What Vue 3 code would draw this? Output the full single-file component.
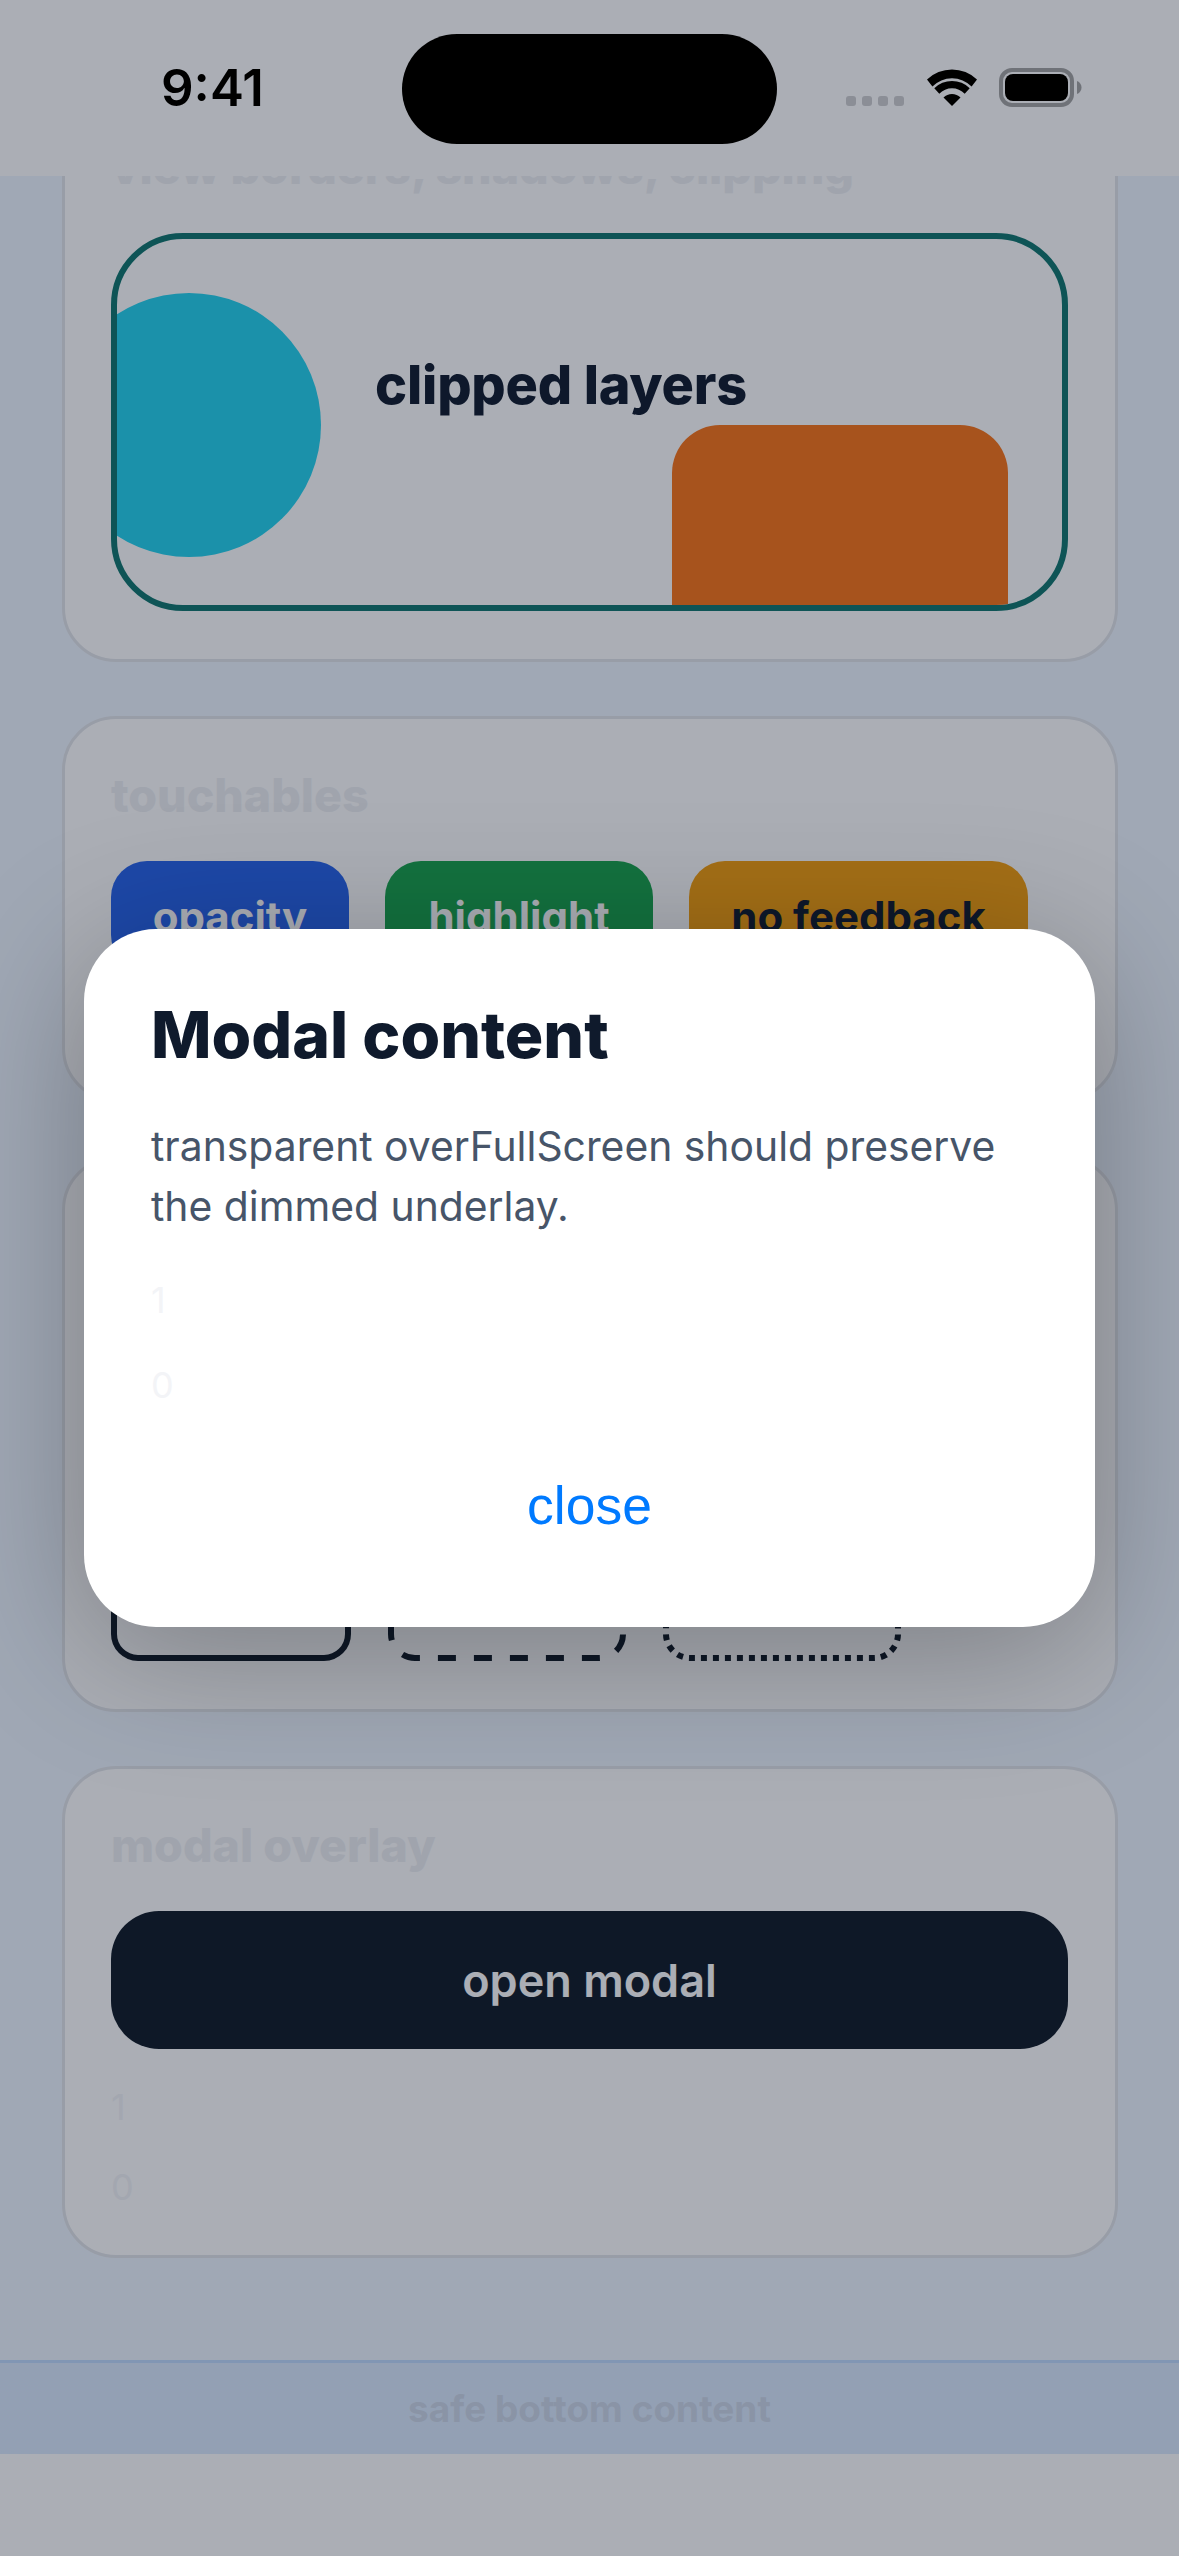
<script setup>
const touchables = [
  { label: 'opacity', cls: 'blue' },
  { label: 'highlight', cls: 'green' },
  { label: 'no feedback', cls: 'amber' }
]
const borders = [
  { dash: 'none', w: 240 },
  { dash: '18 18', w: 238 },
  { dash: '6 6', w: 238 }
]
</script>

<template>
  <div class="page">
    <div class="status-bg"></div>
    <main class="list">
      <section class="card card-view">
        <h2 class="title">view borders, shadows, clipping</h2>
        <div class="clip">
          <div class="circle"></div>
          <span class="clip-text">clipped layers</span>
          <div class="rust"></div>
        </div>
      </section>
      <section class="card card-touch">
        <h2 class="title">touchables</h2>
        <div class="btn-row">
          <div v-for="t in touchables" :key="t.label" class="tbtn" :class="t.cls">{{ t.label }}</div>
        </div>
      </section>
      <section class="card card-border">
        <div class="box-row">
          <svg v-for="(b, i) in borders" :key="i" class="box" :viewBox="`0 0 ${b.w} 120`" :width="b.w" height="120">
            <rect x="3" y="3" :width="b.w - 6" height="114" rx="24" fill="none" stroke="#0f1a26" stroke-width="6" :stroke-dasharray="b.dash" />
          </svg>
        </div>
      </section>
      <section class="card card-modal">
        <h2 class="title">modal overlay</h2>
        <div class="open-btn">open modal</div>
        <div class="counts">
          <span class="count">1</span>
          <span class="count">0</span>
        </div>
      </section>
    </main>
    <footer class="safe">
      <div class="safe-bar">safe bottom content</div>
    </footer>

    <div class="overlay">
      <div class="modal">
        <h1 class="modal-title">Modal content</h1>
        <p class="modal-body">transparent overFullScreen should preserve the dimmed underlay.</p>
        <div class="modal-count">1</div>
        <div class="modal-count">0</div>
        <div class="close">close</div>
      </div>
    </div>

    <header class="status">
      <div class="time">9:41</div>
      <div class="island"></div>
      <div class="indicators">
        <div class="dots"><i></i><i></i><i></i><i></i></div>
        <svg class="wifi" viewBox="0 0 50 37" width="50" height="37">
          <path d="M0 10.500A36 36 0 0 1 50 10.500L44.600 17.500A27.500 27.500 0 0 0 5.400 17.500Z" />
          <path d="M7.300 19.300A25 25 0 0 1 42.700 19.300L37.700 24.800A17.500 17.500 0 0 0 12.300 24.800Z" />
          <path d="M16.500 28.500A12 12 0 0 1 33.500 28.500L25 37Z" />
        </svg>
        <svg class="battery" viewBox="0 0 83 39" width="83" height="39">
          <rect x="2" y="2" width="71" height="35" rx="11" fill="none" stroke="#6f7278" stroke-width="4" />
          <rect x="6" y="6" width="63" height="27" rx="8" fill="#000" />
          <path d="M78 13C81 14 82.500 17 82.500 19.500C82.500 22 81 25 78 26Z" fill="#6f7278" />
        </svg>
      </div>
    </header>
  </div>
</template>

<style scoped>
.page {
  position: relative;
  width: 1179px;
  height: 2556px;
  overflow: hidden;
  background: #eff6ff;
  display: flex;
  flex-direction: column;
  font-family: Inter, "Liberation Sans", sans-serif;
}
.status-bg {
  position: absolute;
  top: 0;
  left: 0;
  right: 0;
  height: 176px;
  background: #fff;
  z-index: 1;
}
.list {
  flex: 1;
  display: flex;
  flex-direction: column;
  gap: 54px;
  padding: 88px 61.5px 0;
}
.card {
  box-sizing: border-box;
  background: #fff;
  border: 3px solid #e2e5ea;
  border-radius: 54px;
  padding: 46px 46.5px;
}
.card-view { height: 574px; }
.card-touch { height: 386px; }
.card-border {
  height: 556px;
  display: flex;
  flex-direction: column;
  justify-content: flex-end;
  padding-bottom: 48px;
}
.card-modal { height: 492px; }
.title {
  margin: 0 0 36px;
  font-size: 46.5px;
  line-height: 60px;
  font-weight: 800;
  color: #eef0f3;
}
.clip {
  position: relative;
  box-sizing: border-box;
  height: 378px;
  border: 6px solid #0f766e;
  border-radius: 72px;
  overflow: hidden;
  display: flex;
  align-items: center;
  background: #fff;
}
.circle {
  position: absolute;
  left: -60px;
  top: 54px;
  width: 264px;
  height: 264px;
  border-radius: 50%;
  background: #22d3ee;
}
.clip-text {
  margin: 0 0 0 258px;
  padding-bottom: 74px;
  font-size: 54px;
  line-height: 66px;
  font-weight: 800;
  letter-spacing: -0.2px;
  color: #0f1a2c;
}
.rust {
  position: absolute;
  right: 54px;
  bottom: 0;
  width: 336px;
  height: 180px;
  border-radius: 48px 48px 0 0;
  background: #f97316;
}
.btn-row {
  display: flex;
  gap: 36px;
}
.tbtn {
  height: 110px;
  display: flex;
  align-items: center;
  justify-content: center;
  box-sizing: border-box;
  border-radius: 36px;
  font-size: 42px;
  font-weight: 700;
  color: #fff;
}
.blue { width: 238px; background: #2563eb; }
.green { width: 268px; background: #16a34a; }
.amber { width: 339px; background: #f59e0b; color: #0f1a2c; }
.box-row {
  display: flex;
  gap: 37px;
}
.box { display: block; flex: none; }
.open-btn {
  height: 138px;
  display: flex;
  align-items: center;
  justify-content: center;
  border-radius: 48px;
  background: #0f1a26;
  color: #fff;
  font-size: 45px;
  font-weight: 600;
}
.counts {
  margin-top: 18px;
  display: flex;
  flex-direction: column;
}
.count {
  height: 80px;
  display: flex;
  align-items: center;
  font-size: 36px;
  color: #f3f4f7;
}
.safe {
  height: 196px;
  background: #fff;
}
.safe-bar {
  box-sizing: border-box;
  height: 94px;
  border-top: 3px solid #bfdbfe;
  background: #dbeafe;
  display: flex;
  align-items: center;
  justify-content: center;
  font-size: 37px;
  font-weight: 700;
  color: #cdd8e8;
}
.overlay {
  position: absolute;
  inset: 0;
  z-index: 2;
  background: rgba(15, 23, 42, 0.35);
  display: flex;
  align-items: center;
  justify-content: center;
}
.modal {
  box-sizing: border-box;
  width: 1011px;
  height: 698px;
  background: #fff;
  border-radius: 72px;
  padding: 66px 67px;
  box-shadow: 0 24px 144px rgba(0, 0, 0, 0.28);
}
.modal-title {
  margin: 0;
  font-size: 64.2px;
  line-height: 80px;
  font-weight: 800;
  color: #0f1a2c;
}
.modal-body {
  margin: 40.5px 0 0;
  font-size: 40.85px;
  line-height: 60px;
  color: #475569;
}
.modal-count {
  height: 85px;
  display: flex;
  align-items: center;
  font-size: 36px;
  color: #f3f4f7;
}
.modal-body + .modal-count { margin-top: 21.5px; }
.close {
  margin-top: 45.5px;
  text-align: center;
  font-family: "Liberation Sans", Inter, sans-serif;
  font-size: 53.5px;
  line-height: 66px;
  color: #007aff;
}
.status {
  position: absolute;
  top: 0;
  left: 0;
  right: 0;
  height: 176px;
  z-index: 3;
  display: grid;
  grid-template-columns: 402px 375px 1fr;
}
.time {
  padding: 62px 0 0 161px;
  font-size: 51px;
  line-height: 52px;
  font-weight: 600;
  color: #000;
}
.island {
  margin-top: 34px;
  height: 110px;
  border-radius: 55px;
  background: #000;
}
.indicators {
  position: relative;
  padding: 68px 0 0 69px;
  display: flex;
  align-items: flex-start;
  gap: 23px;
}
.dots {
  display: flex;
  gap: 6px;
  margin-top: 28px;
}
.dots i {
  width: 10px;
  height: 10px;
  border-radius: 3px;
  background: #8b8e96;
}
.wifi { fill: #000; flex: none; margin-top: 1px; }
.battery { flex: none; margin-left: -1px; }
</style>
